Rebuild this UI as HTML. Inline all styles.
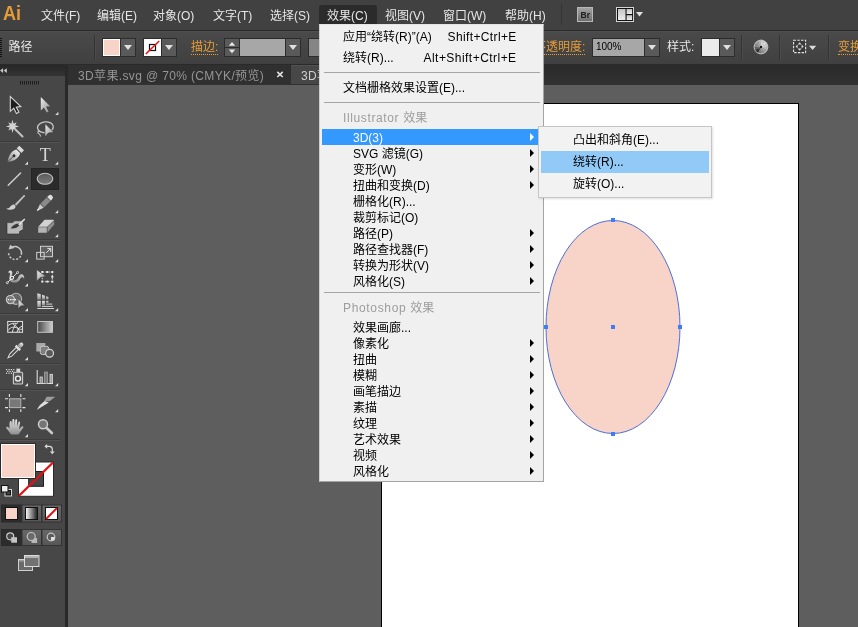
<!DOCTYPE html>
<html lang="zh-CN">
<head>
<meta charset="utf-8">
<title>Adobe Illustrator</title>
<style>
*{margin:0;padding:0;box-sizing:border-box}
html,body{width:858px;height:627px;overflow:hidden;background:#5e5e5e}
body{position:relative;font-family:"Liberation Sans","Noto Sans CJK SC",sans-serif;font-size:12px;color:#e4e4e4}
.abs{position:absolute}
.t{position:absolute;white-space:nowrap;line-height:16px;height:16px}
/* ---------- menubar ---------- */
#menubar{left:0;top:0;width:858px;height:30px;background:#414141}
#menubar-line{left:0;top:30px;width:858px;height:1px;background:#2b2b2b}
#menubar .t{top:8px;color:#e6e6e6}
#menubar #ai{left:3px;top:1px;font-size:21px;line-height:24px;height:24px;font-weight:bold;color:#e59b36;transform:scaleX(.86);transform-origin:0 0}
#mactive{left:319px;top:5px;width:58px;height:20px;background:#2b2b2b;border-radius:3px 3px 0 0}
/* ---------- control bar ---------- */
#ctrl{left:0;top:31px;width:858px;height:33px;background:linear-gradient(#4a4a4a,#404040);box-shadow:inset 0 1px 0 #505050}
#cgrip{left:0;top:7px;width:2px;height:20px;background:repeating-linear-gradient(#111 0,#111 1px,transparent 1px,transparent 2px)}
#ctrl-line{left:0;top:64px;width:858px;height:1px;background:#2a2a2a}
#ctrl .t{top:8px;color:#e6e6e6;font-size:12px}
.orange{color:#e49c38 !important;border-bottom:1px dotted #e49c38;top:9px !important;height:15px !important;line-height:15px !important}
.sw{position:absolute;top:7px;height:19px;border:1px solid #2c2c2c}
.dd{position:absolute;top:7px;width:15px;height:19px;background:#5a5a5a;border:1px solid #2c2c2c;border-left:none}
.dd:after{content:"";position:absolute;left:3px;top:6px;border-left:4px solid transparent;border-right:4px solid transparent;border-top:5px solid #e0e0e0}
.vsep{position:absolute;top:4px;width:1px;height:25px;background:#343434;box-shadow:1px 0 0 #4b4b4b}
/* ---------- tabs ---------- */
#tabbar{left:65px;top:65px;width:793px;height:20px;background:linear-gradient(#2a2a2a,#323232)}
#tab1{left:68px;top:65px;width:222px;height:19px;background:#303030}
#tab2{left:291px;top:65px;width:60px;height:19px;background:#474747;border-top:1px solid #525252}
.tabt{top:68px;color:#959595;font-size:12px;letter-spacing:.36px}
/* ---------- tools ---------- */
#tools{left:0;top:65px;width:65px;height:562px;background:#474747}
#toolsR{left:65px;top:65px;width:3px;height:562px;background:#292929}
#toolhead{left:0;top:65px;width:65px;height:11px;background:#303030}
.hsep{position:absolute;left:0;width:61px;height:1px;background:#3a3a3a;box-shadow:0 1px 0 #555}
/* ---------- canvas ---------- */
#canvas{left:68px;top:85px;width:790px;height:542px;background:#5e5e5e}
#artboard{left:381px;top:103px;width:418px;height:530px;background:#fff;border:1px solid #000}
/* ---------- menu ---------- */
#menu{left:319px;top:24px;width:225px;height:458px;background:#f0f0f0;border:1px solid #a4a4a4;border-top-color:#e4e4e4;border-left-color:#d0d0d0}
#menu>.in{position:absolute;left:1px;top:0}
#menu .t{color:#000}
#menu .g{color:#9d9d9d}
.msep{position:absolute;left:3px;width:216px;height:1px;background:#a6a6a6}
.arr{position:absolute;left:209px;width:0;height:0;margin-top:-1px;border-top:4px solid transparent;border-bottom:4px solid transparent;border-left:4.500px solid #000}
#hl{left:1px;top:104px;width:220px;height:16px;background:#3399ff}
#sub{left:538px;top:126px;width:174px;height:72px;background:#f2f2f2;border:1px solid #c6c6c6;box-shadow:1px 1px 2px rgba(0,0,0,.12)}
#sub .t{color:#000;left:34px}
#subhl{left:2px;top:24px;width:168px;height:22px;background:#91c9f7}
</style>
</head>
<body>
<div id="root" style="position:absolute;left:0;top:0;width:858px;height:627px;will-change:transform">

<!-- canvas + artboard -->
<div class="abs" id="canvas"></div>
<div class="abs" id="artboard"></div>
<svg class="abs" style="left:530px;top:205px" width="170" height="245" viewBox="530 205 170 245">
  <ellipse cx="613" cy="327" rx="67" ry="106.500" fill="#f8d3c8" stroke="#4d6fd8" stroke-width="1"/>
  <g fill="#3f7df6" shape-rendering="crispEdges">
    <rect x="611" y="218" width="4" height="4"/>
    <rect x="611" y="432" width="4" height="4"/>
    <rect x="544" y="325" width="4" height="4"/>
    <rect x="678" y="325" width="4" height="4"/>
    <rect x="611" y="325" width="4" height="4"/>
  </g>
</svg>

<!-- menubar -->
<div class="abs" id="menubar">
  <div class="t" id="ai">Ai</div>
  <div class="abs" id="mactive"></div>
  <div class="t" style="left:41px">文件(F)</div>
  <div class="t" style="left:97px">编辑(E)</div>
  <div class="t" style="left:153px">对象(O)</div>
  <div class="t" style="left:213px">文字(T)</div>
  <div class="t" style="left:270px">选择(S)</div>
  <div class="t" style="left:327px">效果(C)</div>
  <div class="t" style="left:385px">视图(V)</div>
  <div class="t" style="left:443px">窗口(W)</div>
  <div class="t" style="left:505px">帮助(H)</div>
  <div class="vsep" style="left:561px;top:4px;height:21px;box-shadow:none"></div>
  <svg class="abs" style="left:570px;top:0" width="80" height="30" viewBox="570 0 80 30">
    <defs>
      <linearGradient id="brg" x1="0" y1="0" x2="0" y2="1"><stop offset="0" stop-color="#a4a4a4"/><stop offset="1" stop-color="#6c6c6c"/></linearGradient>
      <linearGradient id="lyg" x1="0" y1="0" x2="0" y2="1"><stop offset="0" stop-color="#c4c4c4"/><stop offset="1" stop-color="#ececec"/></linearGradient>
    </defs>
    <rect x="577.500" y="7.500" width="15" height="14" fill="url(#brg)" stroke="#b8b8b8" stroke-width="1"/>
    <text x="585.300" y="17.700" font-family="'Liberation Sans',sans-serif" font-weight="bold" font-size="8.500" text-anchor="middle" fill="#1c1c1c" opacity=".999">Br</text>
    <rect x="616.500" y="7.500" width="17" height="14" fill="#111" stroke="#d4d4d4" stroke-width="1"/>
    <rect x="618" y="9" width="7.500" height="11" fill="url(#lyg)"/>
    <rect x="626.600" y="9" width="5.500" height="5" fill="url(#lyg)"/>
    <rect x="626.600" y="15.200" width="5.500" height="4.800" fill="url(#lyg)"/>
    <path d="M636 12H643L639.500 16.500Z" fill="#dedede"/>
  </svg>
</div>
<div class="abs" id="menubar-line"></div>

<!-- control bar -->
<div class="abs" id="ctrl">
  <div class="abs" id="cgrip"></div>
  <div class="t" style="left:8.500px">路径</div>
  <div class="vsep" style="left:94px"></div>
  <div class="sw" style="left:102px;width:19px;background:#f8d3c8;box-shadow:inset 0 0 0 1px #fff"></div>
  <div class="dd" style="left:121px"></div>
  <div class="sw" style="left:143px;width:19px;background:#fff"></div>
  <div class="dd" style="left:162px"></div>
  <div class="t orange" style="left:191px">描边:</div>
  <div class="sw" style="left:224px;width:16px;background:#5a5a5a"></div>
  <div class="sw" style="left:239px;width:47px;background:#a7a7a7"></div>
  <div class="dd" style="left:286px"></div>
  <div class="sw" style="left:308px;width:16px;background:#858585"></div>
  <div class="t orange" style="left:534px">不透明度:</div>
  <div class="sw" style="left:592px;width:53px;background:#a7a7a7"></div>
  <div class="t" style="left:596px;top:8px;color:#000;font-size:10px;letter-spacing:-.1px">100%</div>
  <div class="dd" style="left:645px"></div>
  <div class="t" style="left:667px">样式:</div>
  <div class="sw" style="left:701px;width:19px;background:#ebebeb"></div>
  <div class="dd" style="left:720px"></div>
  <div class="vsep" style="left:741px"></div>
  <div class="vsep" style="left:779px"></div>
  <div class="vsep" style="left:828px"></div>
  <div class="t orange" style="left:838px">变换</div>
  <svg class="abs" style="left:0;top:0" width="858" height="33" viewBox="0 31 858 33">
    <defs>
      <radialGradient id="cwr" cx=".5" cy=".5" r=".5"><stop offset="0" stop-color="#fff" stop-opacity=".3"/><stop offset=".6" stop-color="#fff" stop-opacity=".05"/><stop offset="1" stop-color="#fff" stop-opacity="0"/></radialGradient>
    </defs>
    <!-- stroke none swatch -->
    <rect x="149.500" y="44.500" width="6" height="6" fill="none" stroke="#111" stroke-width="1.200"/>
    <path d="M145.800 54L159.200 41" stroke="#e01515" stroke-width="1.600"/>
    <!-- spinner -->
    <rect x="224.500" y="47" width="15" height="1" fill="#2c2c2c"/>
    <path d="M228.800 45.800L232 42L235.200 45.800Z" fill="#e8e8e8"/>
    <path d="M228.800 49.400L232 53.200L235.200 49.400Z" fill="#e8e8e8"/>
    <!-- recolor wheel -->
    <g><path d="M761 47L767.90 47.00A6.9 6.9 0 0 1 766.91 50.55Z" fill="#b4b4b4"/><path d="M761 47L766.98 50.45A6.9 6.9 0 0 1 764.35 53.03Z" fill="#9e9e9e"/><path d="M761 47L764.45 52.98A6.9 6.9 0 0 1 760.88 53.90Z" fill="#8a8a8a"/><path d="M761 47L761.00 53.90A6.9 6.9 0 0 1 757.45 52.91Z" fill="#747474"/><path d="M761 47L757.55 52.98A6.9 6.9 0 0 1 754.97 50.35Z" fill="#242424"/><path d="M761 47L755.02 50.45A6.9 6.9 0 0 1 754.10 46.88Z" fill="#585858"/><path d="M761 47L754.10 47.00A6.9 6.9 0 0 1 755.09 43.45Z" fill="#868686"/><path d="M761 47L755.02 43.55A6.9 6.9 0 0 1 757.65 40.97Z" fill="#9a9a9a"/><path d="M761 47L757.55 41.02A6.9 6.9 0 0 1 761.12 40.10Z" fill="#b0b0b0"/><path d="M761 47L761.00 40.10A6.9 6.9 0 0 1 764.55 41.09Z" fill="#cccccc"/><path d="M761 47L764.45 41.02A6.9 6.9 0 0 1 767.03 43.65Z" fill="#dadada"/><path d="M761 47L766.98 43.55A6.9 6.9 0 0 1 767.90 47.12Z" fill="#c6c6c6"/></g>
    <circle cx="761" cy="47" r="6.9" fill="url(#cwr)" stroke="#c2c2c2" stroke-width="1"/>
    <circle cx="761" cy="47" r="1.200" fill="#141414"/>
    <!-- select similar -->
    <rect x="793.600" y="40.300" width="12" height="12.300" fill="#3a3a3a" stroke="#e6e6e6" stroke-width="1.100" stroke-dasharray="2.400 1.300"/>
    <path d="M799.600 42.300L801.500 44.500H797.700ZM799.600 50.700L801.500 48.500H797.700ZM795.500 46.500L797.600 44.600V48.400ZM803.700 46.500L801.600 44.600V48.400Z" fill="#d8d8d8"/>
    <path d="M809 45.700H816.200L812.600 50Z" fill="#dcdcdc"/>
  </svg>
</div>
<div class="abs" id="ctrl-line"></div>

<!-- tabs -->
<div class="abs" id="tabbar"></div>
<div class="abs" id="tab1"></div>
<div class="abs" id="tab2"></div>
<div class="t tabt" style="left:78px">3D苹果.svg @ 70% (CMYK/预览)</div>
<svg class="abs" style="left:275px;top:69px" width="10" height="10" viewBox="0 0 10 10"><path d="M2.300 2.800L7.700 8M7.700 2.800L2.300 8" stroke="#e2e2e2" stroke-width="1.600"/></svg>
<div class="t tabt" style="left:301px;color:#cfcfcf">3D苹</div>

<!-- tools panel -->
<div class="abs" id="tools"></div>
<div class="abs" id="toolsR"></div>
<div class="abs" id="toolhead"></div>
<svg class="abs" id="toolsvg" style="left:0;top:65px;will-change:transform" width="68" height="562" viewBox="0 65 68 562">
  <defs>
    <linearGradient id="gl" x1="0" y1="0" x2="1" y2="1"><stop offset="0" stop-color="#f0f0f0"/><stop offset="1" stop-color="#8c8c8c"/></linearGradient>
    <linearGradient id="gv" x1="0" y1="0" x2="0" y2="1"><stop offset="0" stop-color="#e8e8e8"/><stop offset="1" stop-color="#8e8e8e"/></linearGradient>
    <linearGradient id="gh" x1="0" y1="0" x2="1" y2="0"><stop offset="0" stop-color="#e0e0e0"/><stop offset="1" stop-color="#4a4a4a"/></linearGradient>
    <linearGradient id="ge" x1="0" y1="0" x2="0" y2="1"><stop offset="0" stop-color="#5a5a5a"/><stop offset="1" stop-color="#7c7c7c"/></linearGradient>
    <linearGradient id="hd" x1="0" y1="0" x2="0" y2="1"><stop offset="0" stop-color="#262626"/><stop offset="1" stop-color="#343434"/></linearGradient>
    <linearGradient id="gm" x1="0" y1="0" x2="1" y2="0"><stop offset="0" stop-color="#474747"/><stop offset="1" stop-color="#cfcfcf"/></linearGradient>
    <linearGradient id="gw" x1="0" y1="0" x2="1" y2="0"><stop offset="0" stop-color="#ffffff"/><stop offset="1" stop-color="#1a1a1a"/></linearGradient>
    <linearGradient id="gb" x1="0" y1="0" x2="0" y2="1"><stop offset="0" stop-color="#686868"/><stop offset="1" stop-color="#565656"/></linearGradient>
    <path id="tri" d="M3.200 0V3.200H0Z" fill="#dcdcdc"/>
  </defs>
  <!-- header -->
  <rect x="0" y="65" width="65" height="11" fill="url(#hd)"/>
  <path d="M3.100 68.200v4.800l-3.100-2.400zM6.800 68.200v4.800l-3.100-2.400z" fill="#c8c8c8"/>
  <!-- grip -->
  <g fill="#1e1e1e">
    <rect x="20" y="81" width="1" height="3.500"/><rect x="22" y="81" width="1" height="3.500"/><rect x="24" y="81" width="1" height="3.500"/><rect x="26" y="81" width="1" height="3.500"/><rect x="28" y="81" width="1" height="3.500"/><rect x="30" y="81" width="1" height="3.500"/><rect x="32" y="81" width="1" height="3.500"/><rect x="34" y="81" width="1" height="3.500"/><rect x="36" y="81" width="1" height="3.500"/><rect x="38" y="81" width="1" height="3.500"/>
  </g>
  <!-- separators -->
  <g>
    <rect x="0" y="141" width="60" height="1" fill="#3b3b3b"/><rect x="0" y="142" width="60" height="1" fill="#535353"/>
    <rect x="0" y="239" width="60" height="1" fill="#3b3b3b"/><rect x="0" y="240" width="60" height="1" fill="#535353"/>
    <rect x="0" y="313" width="60" height="1" fill="#3b3b3b"/><rect x="0" y="314" width="60" height="1" fill="#535353"/>
    <rect x="0" y="363" width="60" height="1" fill="#3b3b3b"/><rect x="0" y="364" width="60" height="1" fill="#535353"/>
    <rect x="0" y="389" width="60" height="1" fill="#3b3b3b"/><rect x="0" y="390" width="60" height="1" fill="#535353"/>
    <rect x="0" y="439" width="60" height="1" fill="#3b3b3b"/><rect x="0" y="440" width="60" height="1" fill="#535353"/>
  </g>
  <!-- corner triangles -->
  <g>
    <use href="#tri" x="55.200" y="111.800"/>
    <use href="#tri" x="24.800" y="161.500"/><use href="#tri" x="55" y="161.500"/>
    <use href="#tri" x="24.800" y="186"/><use href="#tri" x="55" y="186"/>
    <use href="#tri" x="55" y="210"/>
    <use href="#tri" x="55" y="234"/>
    <use href="#tri" x="24.800" y="259"/><use href="#tri" x="55" y="259"/>
    <use href="#tri" x="24.800" y="283.300"/>
    <use href="#tri" x="24.800" y="308"/><use href="#tri" x="55" y="308"/>
    <use href="#tri" x="24.800" y="357"/>
    <use href="#tri" x="24.800" y="383"/><use href="#tri" x="55" y="383"/>
    <use href="#tri" x="55" y="409"/>
    <use href="#tri" x="24.800" y="434"/>
  </g>
  <!-- row1: selection / direct selection -->
  <path d="M10.300 96.500V111.300L13.800 108.200L16.400 113.400L18.900 112.200L16.300 107.100L20.800 106.600Z" fill="#1d1d1d" stroke="#d2d2d2" stroke-width="1.100" stroke-linejoin="miter"/>
  <path d="M40.800 97V110.400L44 107.500L46.600 112.600L48.600 111.600L46 106.600L50.200 106.200Z" fill="url(#gl)"/>
  <!-- row2: magic wand / lasso -->
  <path d="M12.5 119.8L13.6 123.7L16.7 122.2L15.2 125.3L19.1 126.4L15.2 127.5L16.7 130.6L13.6 129.1L12.5 133.0L11.4 129.1L8.3 130.6L9.8 127.5L5.9 126.4L9.8 125.3L8.3 122.2L11.4 123.7Z" fill="#d2d2d2"/>
  <path d="M15.400 129.500L22.500 136.500" stroke="#c2c2c2" stroke-width="2" stroke-linecap="round"/>
  <ellipse cx="45.400" cy="127.300" rx="7.900" ry="5.400" fill="none" stroke="#c6c6c6" stroke-width="1.300" transform="rotate(-6 45.400 127.300)"/>
  <path d="M40.300 131.600c-1.800-.9-3.200 .6-1.900 1.700c1.300 .9 2.700 1.500 1.900 3.300" fill="none" stroke="#c6c6c6" stroke-width="1.100"/>
  <path d="M45 123.600L54.200 132.500L48.300 133L45 137.200Z" fill="url(#gl)" stroke="#3c3c3c" stroke-width=".7"/>
  <!-- row3: pen / type -->
  <g transform="translate(15.100 154.600) rotate(45)">
    <path d="M0 10.500C-4.800 4.500 -4.800 -1 -2.600 -4.500H2.600C4.800 -1 4.800 4.500 0 10.500Z" fill="url(#gv)"/>
    <path d="M0 10V2.400" stroke="#474747" stroke-width=".9"/>
    <circle cx="0" cy="1.600" r="1.500" fill="#2e2e2e"/>
    <rect x="-3.300" y="-9.300" width="6.600" height="3.700" fill="#dadada"/>
  </g>
  <text x="45.200" y="160.800" font-family="'Liberation Serif',serif" font-size="18" fill="#d6d6d6" text-anchor="middle">T</text>
  <!-- row4: line / ellipse(selected) -->
  <path d="M8.200 185.300L20.600 172.900" stroke="#d0d0d0" stroke-width="1.400" stroke-linecap="round"/>
  <rect x="31.500" y="168.500" width="27" height="21" fill="#2b2b2b" stroke="#252525" stroke-width="1"/>
  <ellipse cx="45" cy="178.800" rx="7.800" ry="5.500" fill="url(#ge)" stroke="#c4c4c4" stroke-width="1.100"/>
  <!-- row5: brush / pencil -->
  <path d="M23.900 195.100L14.800 204.200L16.300 205.700L24.900 196.300C25.300 195.500 24.700 194.700 23.900 195.100Z" fill="url(#gl)"/>
  <path d="M14.200 204.600C12 204.400 10.800 206 9.800 207.300C8.800 208.300 7.400 208.700 6.200 208.700C8.400 210 12.400 210.300 14.600 208.600C16 207.500 16 205.800 14.200 204.600Z" fill="#cfcfcf"/>
  <g transform="translate(44.500 203.300) rotate(45)">
    <path d="M-2.600 -8.200A2.600 2.600 0 0 1 2.600 -8.200V-6.300H-2.600Z" fill="#dcdcdc"/>
    <path d="M-2.600 -5.600H2.600V3H-2.600Z" fill="#8a8a8a"/>
    <path d="M-2.600 3.700H2.600L0 10.800Z" fill="#cdcdcd"/>
    <path d="M-.9 8.300L0 10.800L.9 8.300Z" fill="#f2f2f2"/>
  </g>
  <!-- row6: blob brush / eraser -->
  <path d="M7 222.600H12.800L14.600 220.800H21.400L23.200 223V229.600L19.500 231.600V234H7Z" fill="#b9b9b9" stroke="#2e2e2e" stroke-width=".6"/>
  <path d="M10.800 228.200C12.500 225 16.500 223.300 20 223.600C20 226.300 15.500 229.300 10.800 228.200Z" fill="#3a3a3a"/>
  <path d="M19.300 224.300L24.300 219.500" stroke="#e0e0e0" stroke-width="1.700" stroke-linecap="round"/>
  <path d="M44.600 219.800H53.400Q54.400 219.800 53.800 220.600L47.200 226.700H38.200Z" fill="#d2d2d2"/>
  <path d="M38.200 227.300H46.800V232.800H38.800Q38.200 232.800 38.200 232.200Z" fill="#b4b4b4"/>
  <path d="M47.500 227.100L54.200 220.900V224.600L47.500 232.600Z" fill="#8e8e8e"/>
  <!-- row7: rotate / scale -->
  <path d="M11.3 247.8A6.4 6.4 0 0 1 21.2 254.7" fill="none" stroke="#c8c8c8" stroke-width="1.500"/>
  <path d="M20.7 256.0A6.4 6.4 0 0 1 8.7 252.1" fill="none" stroke="#c8c8c8" stroke-width="1.500" stroke-dasharray="2.100 1.500"/>
  <path d="M8.600 249.600L10.200 244.800L14.400 247.900Z" fill="#c8c8c8"/>
  <rect x="40.500" y="246.300" width="12" height="10.400" fill="#606060" stroke="#d0d0d0" stroke-width="1"/>
  <rect x="36.700" y="252.400" width="7.500" height="6.700" fill="none" stroke="#d0d0d0" stroke-width="1"/>
  <path d="M46.300 252.800L50.300 248.800M47.300 248.400H50.700V251.800" fill="none" stroke="#e6e6e6" stroke-width="1"/>
  <!-- row8: width / free transform -->
  <path d="M8 272.800C8.300 270.800 10.600 269.600 11.800 271.200C13.300 273.200 11.200 276 10.400 278.600C11.400 280 13.200 280.600 15 280.300C17.600 279.900 18 277.400 19 275.800C20 274.200 22.400 273.600 23.500 275.200C24.300 276.400 24.300 277.600 24.100 278.800C23.300 277.200 21.800 276.800 21 277.800C19.800 279.400 19.600 281.400 17 282.200C14 283 10.800 282.400 9.400 280.200C8.400 278.400 10.200 275.200 10 273.400C9.800 272.400 8.800 272.200 8 272.800Z" fill="url(#gv)"/>
  <path d="M7.400 282.600L17.500 272.600" stroke="#ececec" stroke-width=".9"/>
  <circle cx="12" cy="277.800" r="1.600" fill="#474747" stroke="#f4f4f4" stroke-width="1.100"/>
  <circle cx="7.300" cy="282.700" r="1" fill="#474747" stroke="#f0f0f0" stroke-width=".8"/>
  <circle cx="17.600" cy="272.500" r="1" fill="#474747" stroke="#f0f0f0" stroke-width=".8"/>
  <rect x="42.300" y="272" width="10" height="9.600" fill="none" stroke="#d6d6d6" stroke-width="1" stroke-dasharray="1.600 1.600"/>
  <g fill="#e8e8e8"><rect x="41.300" y="271" width="2" height="2"/><rect x="51.300" y="271" width="2" height="2"/><rect x="41.300" y="280.600" width="2" height="2"/><rect x="51.300" y="280.600" width="2" height="2"/><rect x="46.300" y="271" width="2" height="2"/><rect x="46.300" y="280.600" width="2" height="2"/><rect x="51.300" y="275.800" width="2" height="2"/></g>
  <path d="M36.800 269.800V281L40 277.800L45.800 276.200Z" fill="url(#gl)" stroke="#474747" stroke-width=".6"/>
  <!-- row9: shape builder / perspective grid -->
  <circle cx="16" cy="298.800" r="5.600" fill="#676767" stroke="#b4b4b4" stroke-width="1.100"/>
  <circle cx="10.400" cy="299.600" r="4.100" fill="#7a7a7a" stroke="#cdcdcd" stroke-width="1.100"/>
  <path d="M7.800 299.600H17.400" stroke="#fafafa" stroke-width="1.300" stroke-dasharray="1.300 1"/>
  <path d="M18.100 298.400L25.200 305.700L20.600 306.100L18.100 309.400Z" fill="url(#gl)" stroke="#333" stroke-width=".7"/>
  <g fill="url(#gv)">
    <path d="M37.300 293.200L40.800 294.300V299.500H37.300Z"/><path d="M37.300 300.800H40.800V307H37.300Z"/>
    <path d="M42 294.800L45 295.700V299.500H42Z"/><path d="M42 300.800H45V305.300H42Z"/>
    <path d="M46.200 296.200L48.400 297V299.500H46.200Z"/><path d="M46.200 300.800H48.400V303H46.200Z"/>
  </g>
  <path d="M46.200 304.100H52.300M42 306.400H53.100M37.300 308.500H54" stroke="#d6d6d6" stroke-width="1"/>
  <!-- row10: mesh / gradient -->
  <rect x="7.700" y="321.500" width="14.800" height="10.800" fill="#3e3e3e" stroke="#d8d8d8" stroke-width="1.100"/>
  <path d="M8 325.500C11 323.500 13.500 322.800 16.500 323.500M8 330.500C10.500 327 14 326 18 328.500C20 329.600 21.500 329.500 22.500 329M12.500 332C13 328.500 14.500 325.500 18.500 321.800M17 332C17.500 329.500 19 327.500 22.300 326M12.800 324.200C15.500 325.500 18 327 19.500 331.800" fill="none" stroke="#e6e6e6" stroke-width="1"/>
  <rect x="37.700" y="321.500" width="14.800" height="10.800" fill="url(#gm)" stroke="#c4c4c4" stroke-width="1"/>
  <!-- row11: eyedropper / blend -->
  <g transform="translate(15.300 350.500) rotate(45)">
    <path d="M-1.500 -3H1.500V6.500L0 10.300L-1.500 6.500Z" fill="#474747" stroke="#dcdcdc" stroke-width="1"/>
    <rect x="-3.200" y="-4.800" width="6.400" height="2.200" fill="#e2e2e2"/>
    <path d="M-2 -4.800V-8.500C-2 -11.200 2 -11.200 2 -8.500V-4.800Z" fill="url(#gv)"/>
  </g>
  <rect x="36.300" y="343" width="9" height="8.500" fill="#a8a8a8"/>
  <rect x="40.300" y="346.300" width="8.400" height="8.200" rx="2" fill="#7e7e7e" stroke="#c6c6c6" stroke-width="1"/>
  <circle cx="49.600" cy="353.300" r="3.900" fill="#5a5a5a" stroke="#d6d6d6" stroke-width="1.200"/>
  <!-- row12: symbol sprayer / graph -->
  <rect x="13.400" y="372.300" width="9.200" height="11.700" rx="1" fill="#5a5a5a" stroke="#cfcfcf" stroke-width="1.100"/>
  <rect x="16.400" y="368.600" width="3.800" height="3.400" fill="#d8d8d8"/>
  <circle cx="18" cy="378.600" r="2.500" fill="#474747" stroke="#ececec" stroke-width="1.400"/>
  <g fill="#e0e0e0"><rect x="6" y="369" width="1.200" height="1.200"/><rect x="8.400" y="369" width="1.200" height="1.200"/><rect x="10.800" y="369" width="1.200" height="1.200"/><rect x="13.200" y="369" width="1.200" height="1.200"/><rect x="7.200" y="370.800" width="1.200" height="1.200"/><rect x="9.600" y="370.800" width="1.200" height="1.200"/><rect x="12" y="370.800" width="1.200" height="1.200"/><rect x="6" y="372.600" width="1.200" height="1.200"/><rect x="8.400" y="372.600" width="1.200" height="1.200"/><rect x="10.800" y="372.600" width="1.200" height="1.200"/></g>
  <path d="M37.200 370V383.500H53" fill="none" stroke="#dcdcdc" stroke-width="1.100"/>
  <rect x="40" y="377" width="2.300" height="6.500" fill="#8a8a8a" stroke="#dadada" stroke-width=".8"/>
  <rect x="44.700" y="372" width="2.600" height="11.500" fill="#7a7a7a" stroke="#bcbcbc" stroke-width=".6"/>
  <rect x="50" y="374.300" width="2.400" height="9.200" fill="#9a9a9a" stroke="#e0e0e0" stroke-width=".8"/>
  <!-- row13: artboard / slice -->
  <rect x="9.400" y="398.800" width="11.400" height="8.800" fill="#787878" stroke="#b4b4b4" stroke-width="1"/>
  <path d="M9.400 394V397M20.800 394V397M9.400 409.200V412M20.800 409.200V412M5 398.800H8M5 407.600H8M22.400 398.800H25.400M22.400 407.600H25.400" stroke="#e6e6e6" stroke-width="1.100"/>
  <path d="M46.800 396.700H55.300L49.600 401.300H44Z" fill="#9c9c9c"/>
  <path d="M44.600 401L48.800 402.600L37 409.800C38 406.500 41.500 403.500 44.600 401Z" fill="#dedede"/>
  <!-- row14: hand / zoom -->
  <path d="M9.600 428.300C9.300 425.800 9.400 422.800 10 421.600C10.600 420.600 11.700 421 11.700 422L12 426.300L12.400 420C12.500 418.500 14.300 418.500 14.400 420L14.600 426L15.300 420.300C15.500 418.900 17.200 419.100 17.200 420.500L17.100 426.400L18.400 422.200C18.800 421 20.300 421.400 20.100 422.700L19 429.300L21.800 426.600C22.800 425.800 23.900 426.800 23.100 427.800L18.500 434.500H11.200L6.300 428.200C5.600 427.200 6.800 426.200 7.800 426.900Z" fill="url(#gv)"/>
  <circle cx="43" cy="424.300" r="4.500" fill="#757575" stroke="#cdcdcd" stroke-width="1.500"/>
  <path d="M46.700 428L51.900 433" stroke="#c9c9c9" stroke-width="2.600" stroke-linecap="round"/>
  <!-- fill / stroke swatches -->
  <g>
    <rect x="18.500" y="462" width="35" height="34.300" fill="#fff" stroke="#2a2a2a" stroke-width="1"/>
    <rect x="28.700" y="471.500" width="14.800" height="14.800" fill="#474747" stroke="#1c1c1c" stroke-width="1"/>
    <path d="M19 495.800L53 462.500" stroke="#df1313" stroke-width="2.300"/>
    <rect x="0.500" y="443.500" width="35" height="35" fill="#fff" stroke="#2a2a2a" stroke-width="1"/>
    <rect x="2" y="445" width="32" height="32" fill="#f8d3c8"/>
  </g>
  <!-- swap arrows -->
  <path d="M46 446.300H49.500A3 3 0 0 1 52.300 449.300V452.500" fill="none" stroke="#d8d8d8" stroke-width="1.200"/>
  <path d="M44.300 446.300L47.200 443.900V448.700Z" fill="#d8d8d8"/>
  <path d="M52.300 454.300L49.900 451.400H54.700Z" fill="#d8d8d8"/>
  <!-- default fill/stroke -->
  <rect x="5" y="489.500" width="6.500" height="6.500" fill="#111" stroke="#d8d8d8" stroke-width="1"/>
  <rect x="6.600" y="491.100" width="3.300" height="3.300" fill="#474747"/>
  <rect x="1.500" y="485.500" width="6.500" height="6.500" fill="#ececec" stroke="#111" stroke-width="1"/>
  <!-- color / gradient / none buttons -->
  <rect x="1.500" y="505" width="20" height="17" fill="#2c2c2c" stroke="#2a2a2a" stroke-width="1"/>
  <rect x="22" y="505" width="19.500" height="17" fill="url(#gb)" stroke="#333" stroke-width="1"/>
  <rect x="42" y="505" width="19.500" height="17" fill="url(#gb)" stroke="#333" stroke-width="1"/>
  <rect x="5.500" y="507.500" width="12" height="12" fill="#f8d3c8" stroke="#111" stroke-width="1"/>
  <rect x="25.500" y="507.500" width="12" height="12" fill="url(#gw)" stroke="#111" stroke-width="1"/>
  <rect x="45.500" y="507.500" width="12" height="12" fill="#fff" stroke="#111" stroke-width="1"/>
  <path d="M46 519L57 508" stroke="#df1313" stroke-width="2"/>
  <!-- draw mode buttons -->
  <rect x="1.500" y="529.500" width="20" height="16" fill="#2c2c2c" stroke="#2a2a2a" stroke-width="1"/>
  <rect x="22" y="529.500" width="19.500" height="16" fill="url(#gb)" stroke="#333" stroke-width="1"/>
  <rect x="42" y="529.500" width="19.500" height="16" fill="url(#gb)" stroke="#333" stroke-width="1"/>
  <circle cx="10.200" cy="536.300" r="3.500" fill="#474747" stroke="#c8c8c8" stroke-width="1.200"/>
  <rect x="11.200" y="537.200" width="5.800" height="5.500" fill="#c4c4c4"/>
  <rect x="31.500" y="538" width="5.600" height="5" fill="#b8b8b8"/>
  <circle cx="31.200" cy="536.500" r="4" fill="#6a6a6a" stroke="#c4c4c4" stroke-width="1.200"/>
  <circle cx="51" cy="537" r="3.800" fill="#5c5c5c" stroke="#c8c8c8" stroke-width="1.200"/>
  <rect x="51" y="537" width="3.600" height="3.400" fill="#e0e0e0"/>
  <!-- screen mode -->
  <rect x="18.500" y="559.500" width="14" height="11" fill="#6a6a6a" stroke="#cfcfcf" stroke-width="1"/>
  <rect x="19" y="560" width="13" height="1.600" fill="#9a9a9a"/>
  <rect x="24.500" y="555.500" width="14.500" height="11" fill="#727272" stroke="#dcdcdc" stroke-width="1"/>
  <rect x="25" y="556" width="13.500" height="2" fill="#b4b4b4"/>
</svg>

<!-- effect menu -->
<div class="abs" id="menu"><div class="in">
  <div class="abs" id="hl"></div>
  <div class="arr" style="top:109px;border-left-color:#fff"></div>
  <div class="arr" style="top:125px"></div>
  <div class="arr" style="top:141px"></div>
  <div class="arr" style="top:157px"></div>
  <div class="arr" style="top:205px"></div>
  <div class="arr" style="top:221px"></div>
  <div class="arr" style="top:237px"></div>
  <div class="arr" style="top:253px"></div>
  <div class="arr" style="top:315px"></div>
  <div class="arr" style="top:331px"></div>
  <div class="arr" style="top:347px"></div>
  <div class="arr" style="top:363px"></div>
  <div class="arr" style="top:379px"></div>
  <div class="arr" style="top:395px"></div>
  <div class="arr" style="top:411px"></div>
  <div class="arr" style="top:427px"></div>
  <div class="arr" style="top:443px"></div>
  <div class="t" style="left:22px;top:4px">应用“绕转(R)”(A)</div>
  <div class="t" style="left:126.500px;top:4px;letter-spacing:.38px">Shift+Ctrl+E</div>
  <div class="t" style="left:22px;top:25px">绕转(R)...</div>
  <div class="t" style="left:102.500px;top:25px;letter-spacing:.46px">Alt+Shift+Ctrl+E</div>
  <div class="msep" style="top:47px"></div>
  <div class="t" style="left:22px;top:55px">文档栅格效果设置(E)...</div>
  <div class="msep" style="top:77px"></div>
  <div class="t g" style="left:22px;top:85px"><span style="letter-spacing:.62px">Illustrator </span>效果</div>
  <div class="t" style="left:32px;top:105px;color:#fff">3D(3)</div>
  <div class="t" style="left:32px;top:121px">SVG 滤镜(G)</div>
  <div class="t" style="left:32px;top:137px">变形(W)</div>
  <div class="t" style="left:32px;top:153px">扭曲和变换(D)</div>
  <div class="t" style="left:32px;top:169px">栅格化(R)...</div>
  <div class="t" style="left:32px;top:185px">裁剪标记(O)</div>
  <div class="t" style="left:32px;top:201px">路径(P)</div>
  <div class="t" style="left:32px;top:217px">路径查找器(F)</div>
  <div class="t" style="left:32px;top:233px">转换为形状(V)</div>
  <div class="t" style="left:32px;top:249px">风格化(S)</div>
  <div class="msep" style="top:267px"></div>
  <div class="t g" style="left:22px;top:275px"><span style="letter-spacing:.66px">Photoshop </span>效果</div>
  <div class="t" style="left:32px;top:295px">效果画廊...</div>
  <div class="t" style="left:32px;top:311px">像素化</div>
  <div class="t" style="left:32px;top:327px">扭曲</div>
  <div class="t" style="left:32px;top:343px">模糊</div>
  <div class="t" style="left:32px;top:359px">画笔描边</div>
  <div class="t" style="left:32px;top:375px">素描</div>
  <div class="t" style="left:32px;top:391px">纹理</div>
  <div class="t" style="left:32px;top:407px">艺术效果</div>
  <div class="t" style="left:32px;top:423px">视频</div>
  <div class="t" style="left:32px;top:439px">风格化</div>
</div></div>

<!-- submenu -->
<div class="abs" id="sub">
  <div class="abs" id="subhl"></div>
  <div class="t" style="top:5px">凸出和斜角(E)...</div>
  <div class="t" style="top:27px">绕转(R)...</div>
  <div class="t" style="top:49px">旋转(O)...</div>
</div>

</div>
</body>
</html>
